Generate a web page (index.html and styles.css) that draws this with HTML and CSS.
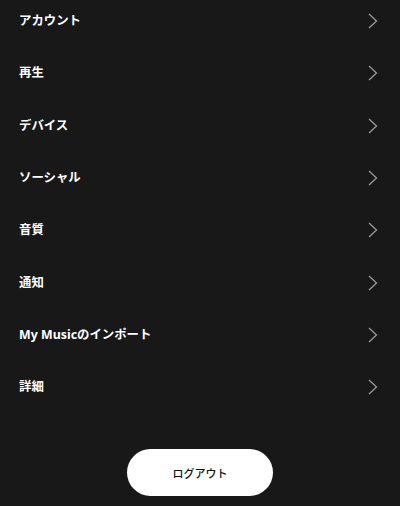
FILE: index.html
```html
<!DOCTYPE html>
<html lang="ja">
<head>
    <meta charset="UTF-8">
    <meta name="viewport" content="width=device-width, initial-scale=1.0">
    <title>設定</title>
    <link rel="stylesheet" href="styles.css">
</head>
<body>
    <div class="settings">
        <ul class="menu">
            <li class="menu-item"><span>アカウント</span><svg class="chevron" viewBox="0 0 10 16"><path d="M1 1l7.5 7L1 15"/></svg></li>
            <li class="menu-item"><span>再生</span><svg class="chevron" viewBox="0 0 10 16"><path d="M1 1l7.5 7L1 15"/></svg></li>
            <li class="menu-item"><span>デバイス</span><svg class="chevron" viewBox="0 0 10 16"><path d="M1 1l7.5 7L1 15"/></svg></li>
            <li class="menu-item"><span>ソーシャル</span><svg class="chevron" viewBox="0 0 10 16"><path d="M1 1l7.5 7L1 15"/></svg></li>
            <li class="menu-item"><span>音質</span><svg class="chevron" viewBox="0 0 10 16"><path d="M1 1l7.5 7L1 15"/></svg></li>
            <li class="menu-item"><span>通知</span><svg class="chevron" viewBox="0 0 10 16"><path d="M1 1l7.5 7L1 15"/></svg></li>
            <li class="menu-item"><span>My Musicのインポート</span><svg class="chevron" viewBox="0 0 10 16"><path d="M1 1l7.5 7L1 15"/></svg></li>
            <li class="menu-item"><span>詳細</span><svg class="chevron" viewBox="0 0 10 16"><path d="M1 1l7.5 7L1 15"/></svg></li>
        </ul>
        <div class="logout-wrap">
            <button class="logout">ログアウト</button>
        </div>
    </div>
</body>
</html>
```

FILE: styles.css
```css
body {
    margin: 0;
    background: #181818;
    font-family: 'Noto Sans', 'Noto Sans CJK JP', sans-serif;
    color: #fff;
}
.settings {
    display: flex;
    flex-direction: column;
    margin-top: -6px;
}
.menu {
    list-style: none;
    margin: 0;
    padding: 0;
}
.menu-item {
    display: flex;
    align-items: center;
    justify-content: space-between;
    height: 52.3px;
    padding: 0 22px 0 19px;
    font-size: 12.4px;
    font-weight: 700;
}
.chevron {
    width: 10px;
    height: 16px;
    fill: none;
    stroke: #9a9a9a;
    stroke-width: 1.3;
    margin-top: 2px;
}
.logout-wrap {
    display: flex;
    justify-content: center;
    padding-top: 37px;
}
.logout {
    width: 146px;
    height: 47px;
    border: none;
    border-radius: 24px;
    background: #fff;
    color: #111;
    font-family: 'Noto Sans', 'Noto Sans CJK JP', sans-serif;
    font-size: 11px;
    font-weight: 500;
    cursor: pointer;
}
```
